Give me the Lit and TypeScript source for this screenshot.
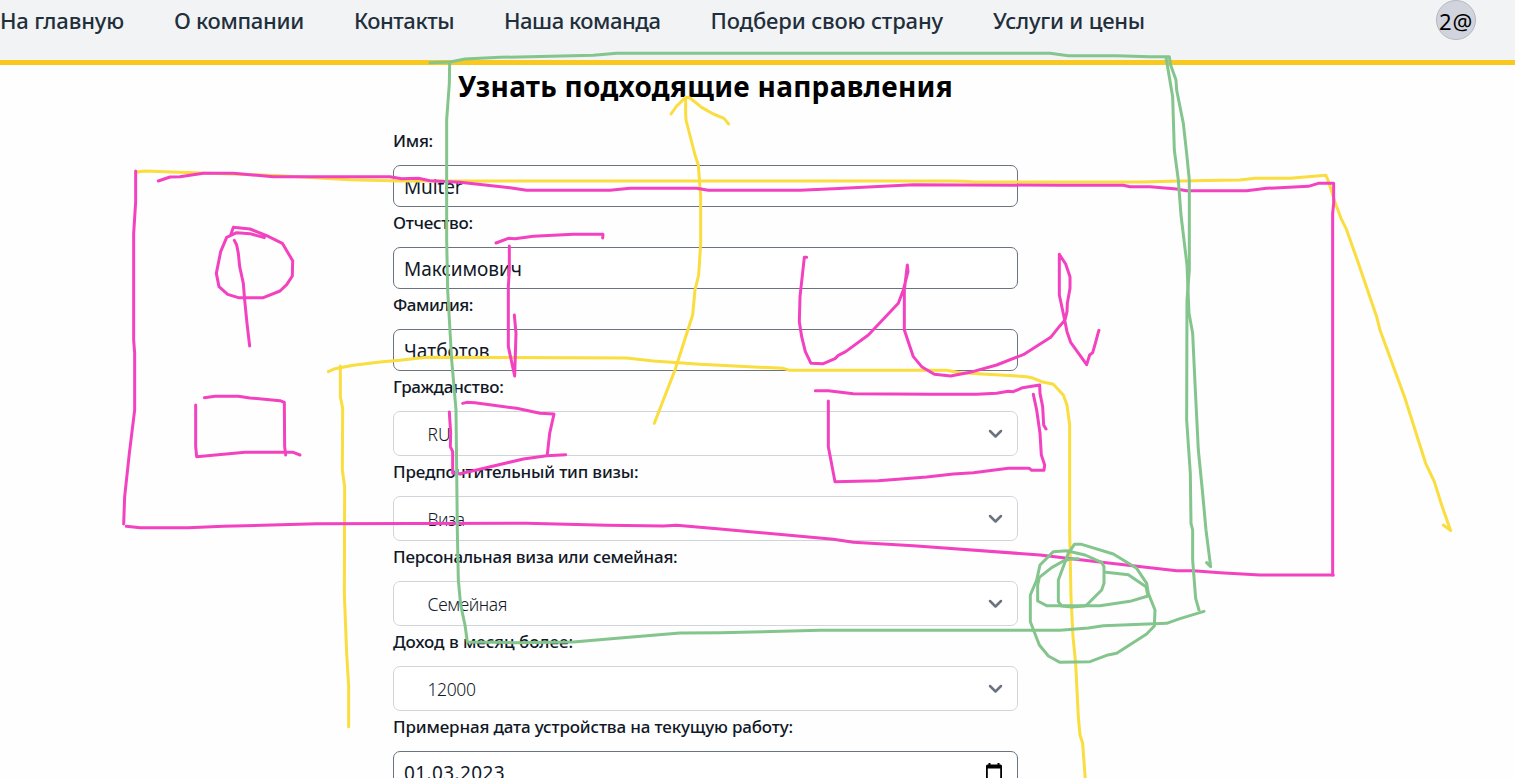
import { LitElement, html, css, svg } from "lit";
import { customElement, property, state } from "lit/decorators.js";

/** One line of text whose tracking is adjusted so that it fills a given width. */
@customElement("fit-text")
class FitText extends LitElement {
  @property() text = "";
  @property({ type: Number }) width = 0;
  @state() private tracking = 0;

  static styles = css`
    :host { display: inline-block; white-space: pre; }
  `;

  firstUpdated() {
    const span = this.renderRoot.querySelector("span")!;
    const natural = span.getBoundingClientRect().width;
    this.tracking = (this.width - natural) / this.text.length;
  }

  render() {
    return html`<span style="letter-spacing:${this.tracking}px">${this.text}</span>`;
  }
}

interface Item { text: string; width: number; }
interface Field { kind: "input" | "select" | "date"; label: Item; value: Item; }

const NAV: Item[] = [
  { text: "На главную", width: 124 },
  { text: "О компании", width: 130 },
  { text: "Контакты", width: 100 },
  { text: "Наша команда", width: 156.5 },
  { text: "Подбери свою страну", width: 232.5 },
  { text: "Услуги и цены", width: 152 },
];

const FIELDS: Field[] = [
  { kind: "input", label: { text: "Имя:", width: 40 }, value: { text: "Multer", width: 58.5 } },
  { kind: "input", label: { text: "Отчество:", width: 80 }, value: { text: "Максимович", width: 118 } },
  { kind: "input", label: { text: "Фамилия:", width: 80 }, value: { text: "Чатботов", width: 85.5 } },
  { kind: "select", label: { text: "Гражданство:", width: 110.5 }, value: { text: "RU", width: 23 } },
  { kind: "select", label: { text: "Предпочтительный тип визы:", width: 245.5 }, value: { text: "Виза", width: 37 } },
  { kind: "select", label: { text: "Персональная виза или семейная:", width: 284.5 }, value: { text: "Семейная", width: 79.5 } },
  { kind: "select", label: { text: "Доход в месяц более:", width: 180 }, value: { text: "12000", width: 48 } },
  { kind: "date", label: { text: "Примерная дата устройства на текущую работу:", width: 400 }, value: { text: "01.03.2023", width: 101 } },
];

/** Pen strokes; points are in thirds of a pixel from the stroke's origin. */
interface Stroke { color: "yellow" | "pink" | "green"; x: number; y: number; points: string; }

const STROKES: Stroke[] = [
  { color: "yellow", x: 0, y: 0, points: "411,516 435,513 600,519 840,527 1050,539 1200,543 2850,543 2890,544 2925,546 3420,546 3540,543 3660,541 3720,540 3765,535 3870,535 3978,526 3985,543 4005,606 4023,655 4038,685 4070,775 4130,950 4140,990 4215,1195 4277,1390 4303,1445 4325,1515 4352,1592 4330,1575" },
  { color: "yellow", x: 0, y: 0, points: "985,1115 1005,1106 1060,1096 1140,1086 1200,1081 1280,1072 1880,1074 1960,1083 2100,1093 2350,1105 2370,1111 2840,1111 2880,1118 3000,1125 3080,1130 3095,1133 3125,1145 3160,1153 3190,1185 3201,1215 3209,1275 3209,1590 3213,1790 3219,1910 3227,1990 3235,2150 3240,2205 3248,2230 3256,2340" },
  { color: "yellow", x: 100, y: 350, points: "721,48 721,140 728,175 727,360 734,410 733,730 740,910 746,1010 746,1130" },
  { color: "yellow", x: 380, y: 120, points: "823,910 850,840 885,750 938,585 945,510 956,465 962,370 962,230 955,135 945,105 918,0 917,-20 917,-68" },
  { color: "yellow", x: 500, y: 0, points: "513,342 530,318 557,292 570,294 605,322 640,342 672,355 686,372" },

  { color: "pink", x: 0, y: 0, points: "407,513 407,605 401,700 401,1020 404,1060 404,1230 388,1360 374,1490 371,1572" },
  { color: "pink", x: 0, y: 0, points: "379,1579 420,1583 565,1583 670,1579 950,1571 1580,1570 1820,1576 1990,1578 2030,1576 2160,1587 2500,1618 2560,1627 2740,1637 3120,1665 3240,1679 3530,1712 3580,1712 3660,1718 3780,1725 4000,1725" },
  { color: "pink", x: 0, y: 0, points: "475,543 510,531 540,530 610,520 700,520 750,524 820,530 1170,530 1205,536 1255,535 1290,542 1380,547 1530,563 1580,571 1830,571 1890,565 2090,565 2125,571 2400,571 2500,566 2740,554 3190,556 3370,556 3390,560 3450,560 3530,567 3560,572 3740,572 3800,565 3925,559 3955,550 4001,550 4001,610 3998,640 3998,1725" },
  { color: "pink", x: 100, y: 120, points: "493,353 450,341 410,338 380,352 362,395 349,460 357,500 383,523 415,533 490,533 540,513 560,494 577,468 578,422 547,370 500,347 450,327 400,322 392,345" },
  { color: "pink", x: 100, y: 120, points: "403,361 410,375 415,400 419,440 430,490 434,540 441,610 449,678" },
  { color: "pink", x: 100, y: 350, points: "313,143 345,139 415,139 450,144 540,152 553,157 554,290 557,315" },
  { color: "pink", x: 100, y: 350, points: "287,165 287,290 290,320 435,307 580,307 600,315" },
  { color: "pink", x: 380, y: 120, points: "348,369 385,355 405,356 460,349 580,343 669,343 668,354" },
  { color: "pink", x: 380, y: 120, points: "388,378 388,450 385,500 385,680 404,768 408,640 403,585" },
  { color: "pink", x: 380, y: 370, points: "248,100 260,97 285,98 410,115 480,130 522,132 509,190 502,253" },
  { color: "pink", x: 380, y: 370, points: "208,126 212,190 211,230 218,245 218,310 240,311 290,300 430,267 500,257 557,254" },
  { color: "pink", x: 700, y: 120, points: "320,412 313,412 300,530 298,605 305,650 316,695 333,730 370,731 405,716 415,706 437,695 505,645 595,550 610,510 624,455 622,435 613,510 613,630 640,710 665,740 703,763 752,768 810,757 890,735 970,704 1052,652 1080,617 1095,600 1101,575 1102,550 1110,505 1110,470 1097,432 1078,403 1078,525 1094,600 1101,635 1112,667 1160,734 1169,705 1178,698 1186,670 1194,640 1197,631" },
  { color: "pink", x: 720, y: 370, points: "286,62 325,62 400,71 630,73 770,73 830,70 865,64 880,65 908,53 959,45 960,70 968,110 971,165 978,177" },
  { color: "pink", x: 720, y: 370, points: "325,93 325,230 345,335 475,332 620,321 700,312 760,308 865,295 928,295 935,301 972,301 974,285 964,255 960,190 950,120 940,73" },

  { color: "green", x: 0, y: 0, points: "1290,188 1350,186 1395,177 1500,172 1780,166 1850,160 3150,160 3205,167 3350,167 3450,170 3508,170 3512,195 3528,240 3530,270 3550,370 3560,460 3568,540 3568,810 3561,900 3560,1260 3571,1420 3573,1570 3578,1590 3578,1680 3587,1795 3597,1830" },
  { color: "green", x: 0, y: 0, points: "3498,172 3518,290 3523,450 3535,540 3543,645 3561,795 3567,940 3578,1000 3586,1170 3595,1350 3607,1470 3618,1590 3632,1700 3620,1688" },
  { color: "green", x: 0, y: 0, points: "1349,188 1348,250 1340,360 1340,720 1343,870 1355,1080 1359,1125 1368,1230 1372,1590 1375,1740 1382,1815 1395,1875 1402,1926 1545,1928 1720,1926 1860,1914 2040,1899 2160,1898 2460,1891 3180,1891 3265,1884 3310,1877 3500,1870 3540,1856 3612,1834" },
  { color: "green", x: 900, y: 530, points: "560,225 605,180 612,160 612,110 605,97 555,75 500,62 460,65 420,105 410,150 391,195 391,275 418,345 445,378 480,397 570,395 620,376 650,370 740,312 763,288 765,240 745,190 740,160 710,115 640,72 545,43 523,43 505,70 475,150 475,215 485,228 515,231 553,228 560,225" },
  { color: "green", x: 900, y: 530, points: "535,86 510,87 490,93 455,113 418,142 413,165 413,213 440,227 600,227 690,214 744,198 738,170 685,134 618,127" },
];

@customElement("app-root")
class AppRoot extends LitElement {
  static styles = css`
    :host {
      display: block;
      position: relative;
      height: 778px;
      overflow: hidden;
      background: #fefefe;
      font-family: "Noto Sans", "Open Sans", sans-serif;
      color: #111827;
    }
    .header {
      box-sizing: border-box;
      height: 65px;
      border-bottom: 5px solid #f9c920;
      background: #f2f3f5;
      display: flex;
      justify-content: space-between;
      align-items: flex-start;
      padding-right: 39px;
    }
    .nav {
      display: flex;
      gap: 50px;
      height: 40px;
      align-items: center;
      font-size: 22px;
      line-height: 30px;
      font-weight: 500;
      color: #1f2f3c;
    }
    .avatar {
      box-sizing: border-box;
      width: 40px;
      height: 40px;
      border: 1px solid #b4b8c0;
      border-radius: 50%;
      background: #d1d4dc;
      display: flex;
      align-items: center;
      justify-content: center;
      font-size: 22px;
      line-height: 30px;
      padding-top: 1px;
      font-weight: 400;
      color: #000;
    }
    .form {
      width: 625px;
      margin-left: 393px;
      display: flex;
      flex-direction: column;
    }
    .title {
      margin: 0;
      height: 56px;
      line-height: 43px;
      font-size: 28px;
      font-weight: 700;
      color: #000;
      text-align: center;
    }
    .label {
      display: block;
      height: 40px;
      line-height: 32px;
      font-size: 17px;
      font-weight: 500;
    }
    .field:first-of-type .label { height: 44px; line-height: 40px; }
    .box {
      box-sizing: border-box;
      height: 42px;
      border: 1px solid #6b7280;
      border-radius: 7px;
      background: #fff;
      display: flex;
      align-items: center;
      justify-content: space-between;
      padding: 1px 15px 0 10px;
      font-size: 19px;
      line-height: 28px;
    }
    .select {
      height: 45px;
      border-color: #d1d5db;
      padding: 0 14px 0 33.500px;
      font-size: 17.500px;
      font-weight: 300;
    }
    .value { font-weight: 380; }
    .date svg { align-self: flex-start; margin-top: 10px; }
    .ink {
      position: absolute;
      left: 0;
      top: 0;
      pointer-events: none;
    }
    .stroke {
      fill: none;
      stroke-width: 9;
      stroke-linecap: round;
      stroke-linejoin: round;
    }
    .yellow { stroke: #fadd3e; }
    .pink { stroke: #f342c0; }
    .green { stroke: #84c58d; }
  `;

  private chevron() {
    return html`<svg width="16" height="16" viewBox="0 0 16 16">
      <path d="M3 5 8.500 10.500 14 5" fill="none" stroke="#6b7280" stroke-width="2.500" stroke-linecap="round" stroke-linejoin="round" />
    </svg>`;
  }

  private calendar() {
    return html`<svg width="16" height="18" viewBox="0 0 16 18">
      <path d="M0 3a1.500 1.500 0 0 1 1.500-1.500H2.500V0h2v1.500h7V0h2v1.500h1A1.500 1.500 0 0 1 16 3v13.500A1.500 1.500 0 0 1 14.500 18h-13A1.500 1.500 0 0 1 0 16.500zM1.800 5.500v10.700h12.400V5.500z" fill="#000" fill-rule="evenodd" />
    </svg>`;
  }

  private field(f: Field) {
    const icon = f.kind === "select" ? this.chevron() : f.kind === "date" ? this.calendar() : "";
    return html`<div class="field">
      <label class="label"><fit-text .text=${f.label.text} .width=${f.label.width}></fit-text></label>
      <div class="box ${f.kind}">
        <fit-text class=${f.kind === "select" ? "" : "value"} .text=${f.value.text} .width=${f.value.width}></fit-text>
        ${icon}
      </div>
    </div>`;
  }

  render() {
    return html`
      <header class="header">
        <nav class="nav">
          ${NAV.map((n) => html`<fit-text .text=${n.text} .width=${n.width}></fit-text>`)}
        </nav>
        <div class="avatar"><fit-text .text=${"2@"} .width=${34}></fit-text></div>
      </header>
      <main class="form">
        <h1 class="title"><fit-text .text=${"Узнать подходящие направления"} .width=${495}></fit-text></h1>
        ${FIELDS.map((f) => this.field(f))}
      </main>
      <svg class="ink" width="1515" height="778" viewBox="0 0 1515 778">
        ${STROKES.map((s) => svg`<polyline class="stroke ${s.color}" transform="translate(${s.x} ${s.y}) scale(0.33333)" points=${s.points} />`)}
      </svg>
    `;
  }
}
